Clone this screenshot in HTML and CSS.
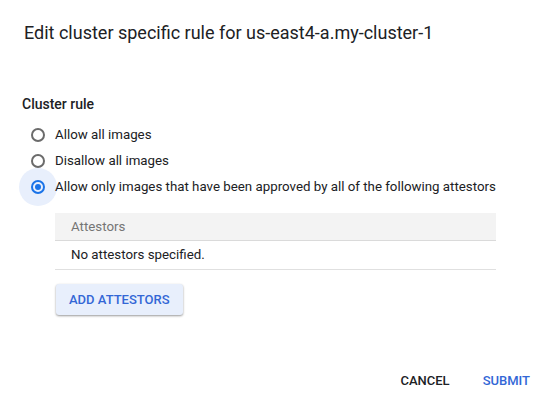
FILE: index.html
```html
<!DOCTYPE html>
<html>
<head>
<meta charset="utf-8">
<link rel="stylesheet" href="styles.css">
</head>
<body>
<div class="dialog">
  <h1 class="title">Edit cluster specific rule for us-east4-a.my-cluster-1</h1>
  <div class="content">
    <div class="section-label">Cluster rule</div>
    <div class="radio-group">
      <label class="radio-row">
        <span class="radio"><span class="ring"></span></span>
        <span class="radio-label">Allow all images</span>
      </label>
      <label class="radio-row">
        <span class="radio"><span class="ring"></span></span>
        <span class="radio-label">Disallow all images</span>
      </label>
      <label class="radio-row checked">
        <span class="radio"><span class="ripple"></span><span class="ring"></span><span class="dot"></span></span>
        <span class="radio-label">Allow only images that have been approved by all of the following attestors</span>
      </label>
    </div>
    <div class="attestors">
      <div class="table">
        <div class="table-head">Attestors</div>
        <div class="table-row">No attestors specified.</div>
      </div>
      <button class="raised-btn">ADD ATTESTORS</button>
    </div>
  </div>
  <div class="actions">
    <button class="text-btn cancel">CANCEL</button>
    <button class="text-btn submit">SUBMIT</button>
  </div>
</div>
</body>
</html>
```

FILE: styles.css
```css
* { box-sizing: border-box; }
html, body {
  margin: 0;
  padding: 0;
  background: #ffffff;
  font-family: Roboto, "Noto Sans", Arial, sans-serif;
  color: #202124;
}
.dialog {
  width: 557px;
  height: 403px;
  padding: 21px 24px 0 24px;
  display: flex;
  flex-direction: column;
}
.title {
  margin: 0;
  font-size: 18px;
  font-weight: 400;
  line-height: 24px;
  color: #202124;
}
.content {
  padding-top: 49px;
  flex: 1;
}
.section-label {
  font-size: 14px;
  font-weight: 500;
  line-height: 20px;
  margin-left: -2px;
}
.radio-group {
  margin-top: 11px;
  display: flex;
  flex-direction: column;
  gap: 6px;
}
.radio-row {
  display: flex;
  align-items: center;
  height: 20px;
  font-size: 13.3px;
  color: #202124;
}
.radio {
  position: relative;
  width: 14px;
  height: 14px;
  margin-left: 7px;
  margin-right: 10px;
  flex: none;
}
.ring {
  position: absolute;
  inset: 0;
  border: 2px solid #6b6b6b;
  border-radius: 50%;
}
.checked .ring {
  border-color: #1a73e8;
}
.ripple {
  position: absolute;
  left: 50%;
  top: 50%;
  width: 38px;
  height: 38px;
  margin: -19px 0 0 -19px;
  border-radius: 50%;
  background: #e8effc;
}
.dot {
  position: absolute;
  left: 4px;
  top: 4px;
  width: 6px;
  height: 6px;
  border-radius: 50%;
  background: #1a73e8;
}
.radio-label {
  position: relative;
  line-height: 20px;
}
.attestors {
  margin-top: 16px;
  margin-left: 31px;
  width: 441px;
}
.table {
  font-size: 13.3px;
}
.table-head {
  height: 28px;
  background: #f3f3f3;
  border-bottom: 1px solid #dadada;
  color: #757575;
  padding-left: 16px;
  line-height: 27px;
}
.table-row {
  height: 29px;
  border-bottom: 1px solid #e0e0e0;
  padding-left: 16px;
  line-height: 28px;
  color: #202124;
}
.raised-btn {
  margin-top: 14px;
  margin-left: 1px;
  height: 31px;
  padding: 0 13px;
  border: none;
  border-radius: 3px;
  background: #e8effc;
  color: #3367d6;
  font-family: Roboto, Arial, sans-serif;
  font-size: 13px;
  font-weight: 500;
  letter-spacing: 0;
  box-shadow: 0 1px 2px rgba(0,0,0,0.3), 0 1px 3px rgba(0,0,0,0.12);
}
.actions {
  display: flex;
  justify-content: flex-end;
  gap: 17px;
  margin-right: -5px;
  height: 34px;
  align-items: flex-start;
}
.text-btn {
  border: none;
  background: transparent;
  font-family: Roboto, Arial, sans-serif;
  font-size: 13px;
  font-weight: 500;
  letter-spacing: 0;
  padding: 4px 8px;
}
.cancel { color: #202124; }
.submit { color: #3367d6; }
```
